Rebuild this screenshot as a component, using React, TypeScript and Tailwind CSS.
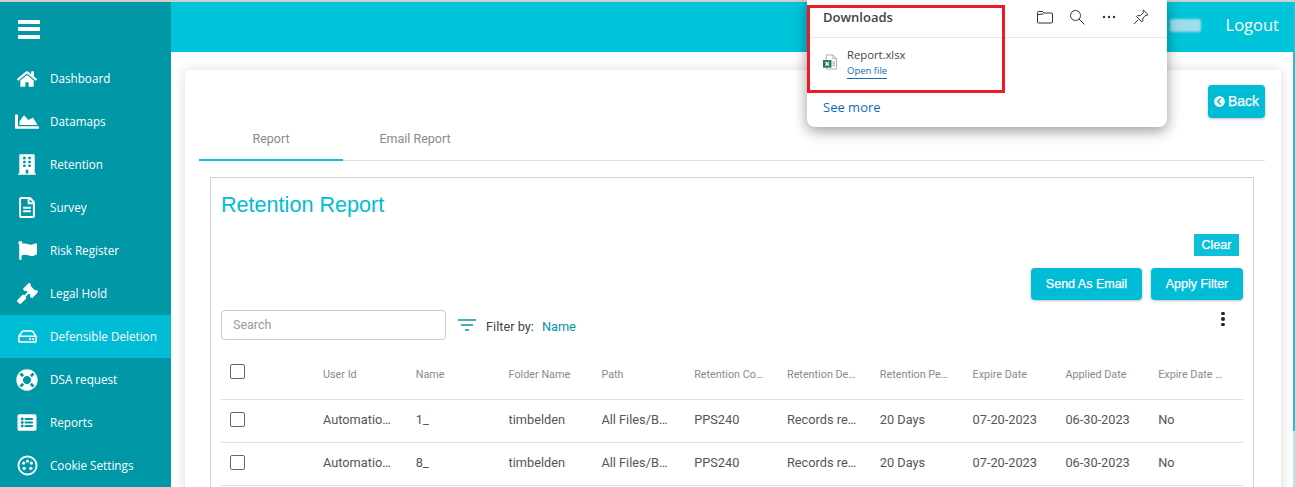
import {
  FaHome,
  FaChartArea,
  FaBuilding,
  FaRegFileAlt,
  FaFlag,
  FaGavel,
  FaRegHdd,
  FaLifeRing,
  FaListAlt,
  FaChevronCircleLeft,
} from "react-icons/fa";

function CookieIcon({ className }: { className?: string }) {
  return (
    <svg viewBox="0 0 22 22" className={className} fill="none">
      <circle cx="11" cy="11" r="9.5" stroke="currentColor" strokeWidth="2" />
      <circle cx="7" cy="8.5" r="1.7" fill="currentColor" />
      <circle cx="15" cy="8.5" r="1.7" fill="currentColor" />
      <circle cx="11" cy="6.5" r="1.5" fill="currentColor" />
      <circle cx="7.5" cy="14" r="1.7" fill="currentColor" />
      <circle cx="14.5" cy="14" r="1.7" fill="currentColor" />
    </svg>
  );
}

const navItems = [
  { label: "Dashboard", icon: <FaHome className="w-[20px] h-[18px]" /> },
  { label: "Datamaps", icon: <FaChartArea preserveAspectRatio="none" className="w-[24px] h-[19px] shrink-0" /> },
  { label: "Retention", icon: <FaBuilding className="w-[18px] h-[21px]" /> },
  { label: "Survey", icon: <FaRegFileAlt className="w-[18px] h-[21px]" /> },
  { label: "Risk Register", icon: <FaFlag className="w-[21px] h-[19px]" /> },
  { label: "Legal Hold", icon: <FaGavel className="w-[21px] h-[21px]" /> },
  { label: "Defensible Deletion", icon: <FaRegHdd className="w-[19px] h-[17px]" />, active: true },
  { label: "DSA request", icon: <FaLifeRing className="w-[22px] h-[22px]" /> },
  { label: "Reports", icon: <FaListAlt className="w-[22px] h-[19px]" /> },
  { label: "Cookie Settings", icon: <CookieIcon className="w-[21px] h-[21px]" /> },
];

const columns = [
  "User Id",
  "Name",
  "Folder Name",
  "Path",
  "Retention Code",
  "Retention Description",
  "Retention Period",
  "Expire Date",
  "Applied Date",
  "Expire Date Override",
];

const rows = [
  ["Automation User", "1_", "timbelden", "All Files/BMO Reports", "PPS240", "Records retention", "20 Days", "07-20-2023", "06-30-2023", "No"],
  ["Automation User", "8_", "timbelden", "All Files/BMO Reports", "PPS240", "Records retention", "20 Days", "07-20-2023", "06-30-2023", "No"],
];

const gridCols = "grid grid-cols-[102px_repeat(9,92.8px)_84px]";

function Checkbox({ className }: { className?: string }) {
  return <div className={`w-[15px] h-[15px] border border-[#666] rounded-[2px] bg-white ${className ?? ""}`} />;
}

function DownloadsPopup() {
  return (
    <div className="absolute left-[807px] top-0 z-20 w-[360px] h-[127px] bg-white rounded-b-[8px] shadow-[0_4px_14px_rgba(0,0,0,0.4)] font-['Open_Sans',sans-serif]">
      <div className="h-[38px] border-b border-[#e8e8e8] pl-[16px] pr-[18px] flex items-center justify-between">
        <span className="text-[13px] font-semibold text-[#444] -mt-[2px]">Downloads</span>
        <div className="flex items-center gap-[16px] text-[#333] -mt-[3px]">
          <svg viewBox="0 0 16 16" className="w-[16px] h-[16px]" fill="none" stroke="currentColor" strokeWidth="1">
            <path d="M.5 3.5a1 1 0 0 1 1-1h4l1.500 1.500h7.500a1 1 0 0 1 1 1v8a1 1 0 0 1-1 1h-13a1 1 0 0 1-1-1zM.5 5.500l6-.5" />
          </svg>
          <svg viewBox="0 0 16 16" className="w-[16px] h-[16px]" fill="none" stroke="currentColor" strokeWidth="1">
            <circle cx="6.500" cy="6.500" r="5" />
            <path d="M10 10l5.500 5.500" />
          </svg>
          <svg viewBox="0 0 16 16" className="w-[16px] h-[16px]" fill="currentColor">
            <circle cx="3" cy="8" r="1.200" />
            <circle cx="8" cy="8" r="1.200" />
            <circle cx="13" cy="8" r="1.200" />
          </svg>
          <svg viewBox="0 0 16 16" className="w-[16px] h-[16px]" fill="none" stroke="currentColor" strokeWidth="1">
            <path d="M10.300 1 15 5.700l-1.200.7-1-.3-3 3 .1 2.800-1 1-5.300-5.300 1-1 2.800.1 3-3-.3-1zM5 11l-4 4" />
          </svg>
        </div>
      </div>
      <div className="flex items-start pl-[16px] pt-[9px] h-[50px]">
        <svg viewBox="0 0 16 16" className="w-[15px] h-[16px] mt-[7px]" fill="none">
          <path d="M3.500.5h7l4 4v11h-11z" fill="#fff" stroke="#aaa" />
          <path d="M10.500.5v4h4" stroke="#aaa" />
          <path d="M10 8h3M10 10h3M10 12h3" stroke="#7cb68f" />
          <rect x="0" y="6" width="9" height="8" fill="#1d7a45" />
          <path d="M2.500 8 6.500 12M6.500 8l-4 4" stroke="#fff" strokeWidth="1.200" />
        </svg>
        <div className="ml-[9px] flex flex-col items-start">
          <span className="text-[11.250px] leading-[16px] text-[#444]">Report.xlsx</span>
          <span className="text-[9.500px] leading-[13px] mt-[1px] pb-[1px] border-b border-[#0f6cbd] text-[#0f6cbd]">Open file</span>
        </div>
      </div>
      <div className="pl-[16px] pt-[10px] text-[13px] leading-[18px] text-[#0f6cbd]">See more</div>
      <div className="absolute left-0 top-[5px] w-[198px] h-[88px] border-[3px] border-[#ed1c24]" />
    </div>
  );
}

export default function App() {
  return (
    <div className="relative w-[1295px] h-[487px] overflow-hidden bg-white flex flex-col font-['Roboto',sans-serif]">
      <div className="h-[2px] bg-[#cfcfcf] shrink-0" />
      <div className="flex flex-1 min-h-0">
        <aside className="w-[171px] shrink-0 bg-[#0097a7] text-white font-['Open_Sans',sans-serif]">
          <div className="h-[55px] flex items-center pl-[18px]">
            <div className="w-[22px] flex flex-col gap-[3.500px] mt-[-1px]">
              <div className="h-[4px] bg-white" />
              <div className="h-[4px] bg-white" />
              <div className="h-[4px] bg-white" />
            </div>
          </div>
          {navItems.map((item) => (
            <div
              key={item.label}
              className={`h-[43px] flex items-center ${item.active ? "bg-[#00bcd4]" : ""}`}
            >
              <div className="w-[50px] pl-[12px] pr-[8px] flex justify-center">{item.icon}</div>
              <span className="text-[11.700px] whitespace-nowrap">{item.label}</span>
            </div>
          ))}
        </aside>

        <main className="flex-1 min-w-0 flex flex-col">
          <header className="h-[50px] shrink-0 bg-[#00c4d9] flex items-center justify-end pr-[14px] pb-[4px] text-white">
            <div className="w-[31px] h-[13px] mr-[25px] mt-[1px] bg-[#9fdcec] rounded-[2px] blur-[1px]" />
            <span className="text-[16.500px] font-['Open_Sans',sans-serif]">Logout</span>
          </header>

          <div className="flex-1 pl-[14px] pt-[18px] pr-[12px] bg-white">
            <section className="h-[500px] rounded-[4px] bg-white shadow-[0_0_14px_rgba(0,0,0,0.14)] pl-[14px] pr-[16px] pt-[15px]">
              <div className="flex justify-end">
                <button className="w-[57px] h-[33px] rounded-[4px] bg-[#00bcd4] text-white text-[14px] font-['Liberation_Sans',sans-serif] [-webkit-text-stroke:0.25px_white] flex items-center justify-center gap-[3px] shadow-[0_1px_3px_rgba(0,0,0,0.25)]">
                  <FaChevronCircleLeft className="w-[11px] h-[11px]" />
                  Back
                </button>
              </div>

              <div className="mt-[7px] h-[36px] flex border-b border-[#e0e0e0] text-[12.500px] text-[#8a8a8a]">
                <div className="w-[144px] h-[36px] flex items-center justify-center border-b-[2px] border-[#00c4d9] pb-[6px]">Report</div>
                <div className="w-[144px] flex items-center justify-center pb-[6px]">Email Report</div>
              </div>

              <div className="mt-[16px] ml-[11px] mr-[11px] h-[400px] border border-[#d4d4d4] pl-[10px] pr-[10px] pt-[13px]">
                <h1 className="text-[21.600px] leading-[28px] text-[#00bcd4] font-['Liberation_Sans',sans-serif]">Retention Report</h1>

                <div className="mt-[15px] flex justify-end pr-[4px]">
                  <button className="w-[45px] h-[22px] bg-[#0cc0d8] text-white text-[12.500px] font-['Liberation_Sans',sans-serif] [-webkit-text-stroke:0.25px_white]">Clear</button>
                </div>
                <div className="mt-[12px] flex justify-end gap-[9px]">
                  <button className="w-[111px] h-[32px] rounded-[4px] bg-[#00bcd4] text-white text-[12.500px] font-['Liberation_Sans',sans-serif] [-webkit-text-stroke:0.25px_white] shadow-[0_1px_3px_rgba(0,0,0,0.25)]">Send As Email</button>
                  <button className="w-[92px] h-[32px] rounded-[4px] bg-[#00bcd4] text-white text-[12.500px] font-['Liberation_Sans',sans-serif] [-webkit-text-stroke:0.25px_white] shadow-[0_1px_3px_rgba(0,0,0,0.25)]">Apply Filter</button>
                </div>

                <div className="mt-[10px] h-[30px] flex items-center">
                  <div className="w-[225px] h-[30px] border border-[#cacaca] rounded-[4px] pl-[11px] flex items-center text-[12.500px] text-[#9a9a9a]">Search</div>
                  <svg viewBox="0 0 18 13" className="w-[18px] h-[13px] ml-[12px]" fill="none">
                    <path d="M0 1h18" stroke="#0097a7" strokeWidth="1.500" />
                    <path d="M3 6h12" stroke="#0097a7" strokeWidth="1.500" />
                    <path d="M7 11h4" stroke="#0097a7" strokeWidth="1.500" />
                  </svg>
                  <span className="ml-[10px] text-[12.750px] mt-[3px] text-[#444]">Filter by:</span>
                  <span className="ml-[8px] text-[12.750px] mt-[3px] text-[#0097a7]">Name</span>
                  <div className="ml-auto mr-[18px] -mt-[12px] flex flex-col gap-[2px]">
                    <div className="w-[4px] h-[3.500px] rounded-full bg-[#222]" />
                    <div className="w-[4px] h-[3.500px] rounded-full bg-[#222]" />
                    <div className="w-[4px] h-[3.500px] rounded-full bg-[#222]" />
                  </div>
                </div>

                <div className={`${gridCols} mt-[11px] h-[49px] items-center border-b border-[#e0e0e0] text-[10.800px] text-[#8a8a8a]`}>
                  <div className="pl-[9px]">
                    <Checkbox className="-mt-[7px]" />
                  </div>
                  {columns.map((c, j) => (
                    <div key={c} className={j === columns.length - 1 ? "truncate pr-[14px]" : "truncate pr-[22px]"}>{c}</div>
                  ))}
                </div>
                {rows.map((row, i) => (
                  <div key={i} className={`${gridCols} h-[43px] pb-[2px] items-center border-b border-[#e0e0e0] text-[12.750px] text-[#555]`}>
                    <div className="pl-[9px]">
                      <Checkbox className="-mt-[1px]" />
                    </div>
                    {row.map((cell, j) => (
                      <div key={j} className="truncate pr-[20px]">{cell}</div>
                    ))}
                  </div>
                ))}
              </div>
            </section>
          </div>
        </main>

        <div className="w-[2px] shrink-0 flex flex-col bg-[#b4ecf3]">
          <div className="h-[429px] bg-[#1fc3d6]" />
        </div>
      </div>
      <DownloadsPopup />
    </div>
  );
}
